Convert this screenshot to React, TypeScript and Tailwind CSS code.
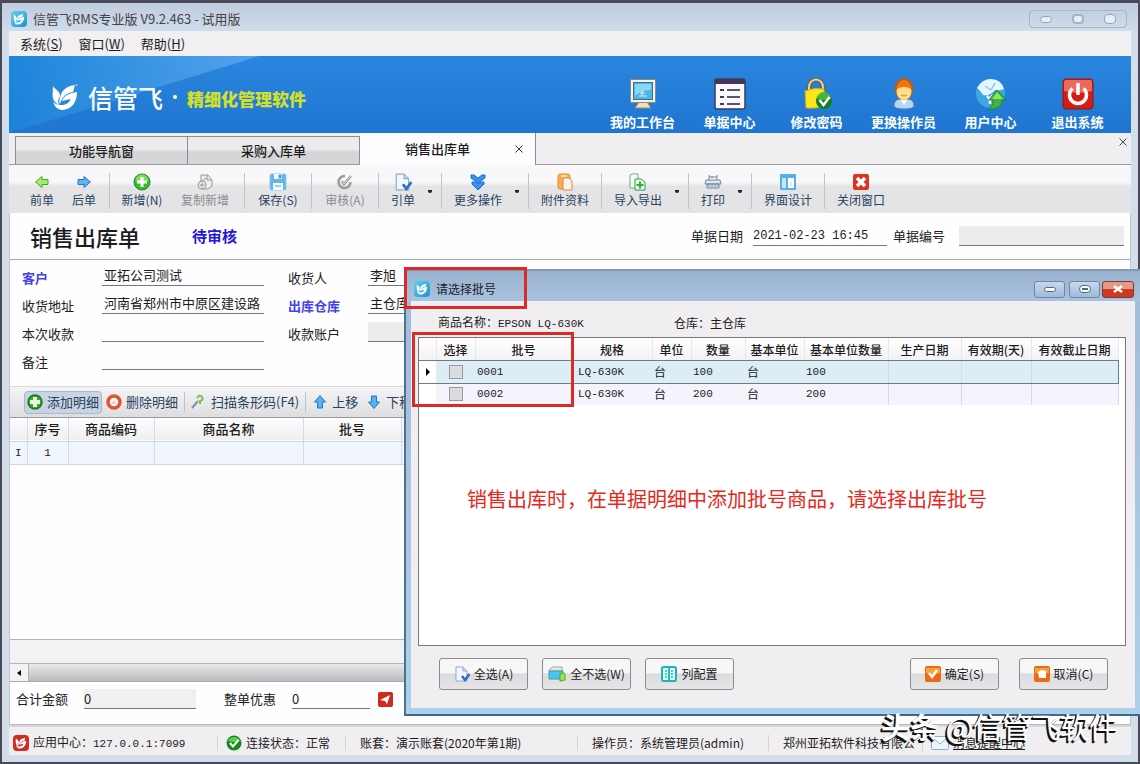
import React from 'react';
import { clsx } from 'clsx';

const Check = ({ className }: { className?: string }) => (
  <svg viewBox="0 0 16 16" className={className}>
    <circle cx="8" cy="8" r="7.5" fill="#128a1c" />
    <path d="M2 6a6.5 6.5 0 0 1 12 0Q8 8 2 6" fill="#5fce4f" />
    <path d="m4 8 3 3.5L12.5 5" fill="none" stroke="#fff" strokeWidth="2" />
  </svg>
);

const Bird = ({ className, fill = '#fff' }: { className?: string; fill?: string }) => (
  <svg viewBox="0 0 26 28" className={className} fill={fill}>
    <path d="M1 3c1 3 6 4 7 9q0 3-2 5 0 2 1 5-6-3-6.500-9z" />
    <path d="M23 2C14 3 9 8 8 15c-1 2-1 4 0 6 2-7 6-11 13-12z" />
    <path d="M25 9c-7 1-13 3-15 9l8.500-2c-1 4-5 6-9.500 6-3 0-6-1-8-3 2 6 6 8 10 8 9-1 14-8 14-18z" />
    <circle cx="24.500" cy="2" r="1" opacity=".6" />
  </svg>
);

const AppMark = ({ className }: { className?: string }) => (
  <span className={clsx('flex shrink-0 items-center justify-center rounded bg-linear-to-br from-[#5fd0f0] to-[#1593cf]', className)}>
    <Bird className="size-3" />
  </span>
);

const Clipboard = ({ className }: { className?: string }) => (
  <svg viewBox="0 0 16 16" className={className}>
    <path d="M2 1h7l4 4v10H2z" fill="#f3f7fc" stroke="#8da8cf" />
    <path d="M9 1v4h4" fill="#c9daf0" stroke="#8da8cf" />
    <path d="m8 10 3 4 4.500-6" fill="none" stroke="#2a6cd0" strokeWidth="2.500" />
  </svg>
);

const Arrow = ({ className, fill, stroke }: { className?: string; fill: string; stroke: string }) => (
  <svg viewBox="0 0 16 16" className={className}>
    <path d="M1.500 8 8 2.500V5.500H14v5H8v3z" fill={fill} stroke={stroke} strokeLinejoin="round" />
  </svg>
);

const icons = {
  prev: <Arrow className="size-4" fill="#a4ee5c" stroke="#44a52c" />,
  next: <Arrow className="size-4 rotate-180" fill="#5cb4f8" stroke="#2c72bd" />,
  add: (
    <svg viewBox="0 0 18 18" className="size-[18px]">
      <circle cx="9" cy="9" r="8" fill="#3cb72c" stroke="#238a1c" />
      <path d="M2.500 8a6.500 6.500 0 0 1 13 0Q9 10 2.500 8" fill="#7fdc63" />
      <path d="M9 4v10M4 9h10" stroke="#fff" strokeWidth="3" />
    </svg>
  ),
  copy: (
    <svg viewBox="0 0 18 18" className="size-[18px]" fill="#eee" stroke="#999">
      <path d="M5 2h7l4 5v6l-4 3H5z" />
      <path d="M11 2v5h5M10 5 5 9" fill="none" />
      <circle cx="6" cy="12" r="4" />
      <path d="M3.500 12h5M6 9.500v5" />
    </svg>
  ),
  save: (
    <svg viewBox="0 0 18 18" className="size-[18px]">
      <rect x="1" y="1" width="16" height="16" rx="1.500" fill="#62b5e6" stroke="#8ccbf0" />
      <path d="M5 1h8v5H5zM4 10h10v7H4z" fill="#f2fbff" />
      <path d="M10 2h2v3h-2zM6 13h6" fill="#4d9ed2" stroke="#4d9ed2" />
    </svg>
  ),
  audit: (
    <svg viewBox="0 0 18 18" className="size-[18px]" fill="none" stroke="#999">
      <path d="M14.500 9A6 6 0 1 1 9 3" strokeWidth="2.500" />
      <path d="M5.500 8 8 11l7-8" strokeWidth="2.500" />
      <path d="M5.500 8 8 11l7-8" stroke="#ddd" />
    </svg>
  ),
  quote: <Clipboard className="size-[18px]" />,
  more: (
    <svg viewBox="0 0 18 18" className="size-[18px]" fill="#3792ee" stroke="#1c6cc8" strokeLinejoin="round">
      <path d="m2 2 3 0 4 3 4-3 3 0 0 3-7 5-7-5z" />
      <path d="m3 9 3 0 3 2 3-2 3 0 0 2-6 6-6-6z" />
    </svg>
  ),
  attach: (
    <svg viewBox="0 0 18 18" className="size-[18px]">
      <rect x="2" y="1" width="12" height="15" rx="2" fill="#f8ad4a" stroke="#e58e27" />
      <path d="M7 5h6l3 3v9H7z" fill="#fff2e4" stroke="#db8550" />
      <path d="M5 2h6v2H5z" fill="#fde0a8" />
    </svg>
  ),
  io: (
    <svg viewBox="0 0 18 18" className="size-[18px]">
      <path d="M1 2q3-2 8-1v14H1z" fill="#f7fbf8" stroke="#7da292" />
      <path d="M6 6h6l4 3v8H6z" fill="#effcef" stroke="#2f9e3a" />
      <path d="M11 8.500v7M7.500 12h7" stroke="#2fae3a" strokeWidth="2" />
    </svg>
  ),
  print: (
    <svg viewBox="0 0 18 18" className="size-[18px]" fill="#dfe5ec" stroke="#74869b">
      <path d="M5 7V2M13 7V2M8 5V3M5 4h8" />
      <path d="M2 7h14l1 4H1zM3 11h12v4H3z" />
      <path d="M4 13h10" strokeDasharray="2 1" />
    </svg>
  ),
  design: (
    <svg viewBox="0 0 18 18" className="size-[18px]">
      <rect x="1" y="1" width="16" height="16" rx="1" fill="#58afe6" />
      <path d="M3 5h4v10H3z" fill="#c5e6fa" />
      <path d="M9 5h6v10H9z" fill="#fff" />
      <path d="M12 8v5" stroke="#b6d8ee" />
    </svg>
  ),
  close: (
    <svg viewBox="0 0 18 18" className="size-[18px]">
      <rect x="1" y="1" width="16" height="16" rx="2" fill="#d93521" />
      <path d="m5 5 8 8M13 5l-8 8" stroke="#fff" strokeWidth="3.500" />
    </svg>
  ),
};

type Tool = { label: string; icon: keyof typeof icons; width: string; disabled?: boolean; menu?: boolean; sep?: boolean };

const tools: Tool[] = [
  { label: '前单', icon: 'prev', width: 'w-[42px]' },
  { label: '后单', icon: 'next', width: 'w-[42px]', sep: true },
  { label: '新增(N)', icon: 'add', width: 'w-14' },
  { label: '复制新增', icon: 'copy', width: 'w-[70px]', disabled: true, sep: true },
  { label: '保存(S)', icon: 'save', width: 'w-[58px]', sep: true },
  { label: '审核(A)', icon: 'audit', width: 'w-[58px]', disabled: true, sep: true },
  { label: '引单', icon: 'quote', width: 'w-10', menu: true, sep: true },
  { label: '更多操作', icon: 'more', width: 'w-16', menu: true, sep: true },
  { label: '附件资料', icon: 'attach', width: 'w-16', sep: true },
  { label: '导入导出', icon: 'io', width: 'w-16', menu: true, sep: true },
  { label: '打印', icon: 'print', width: 'w-10', menu: true, sep: true },
  { label: '界面设计', icon: 'design', width: 'w-16', sep: true },
  { label: '关闭窗口', icon: 'close', width: 'w-16' },
];

const navItems = [
  {
    label: '我的工作台',
    icon: (
      <svg viewBox="0 0 32 32" className="size-8">
        <path d="M12 24h8l4 6H8z" fill="#f6dfb4" stroke="#9c8b66" />
        <rect x="3.500" y="1.500" width="25" height="23" fill="#f7f4e4" stroke="#8a8a80" />
        <rect x="6.500" y="4.500" width="19" height="17" fill="#4db6e8" stroke="#3d6f92" />
        <path d="M8 6h16v6Q14 12 8 18z" fill="#8ad6f5" />
        <path d="M12 18h8M13 15h5M15 12v6" stroke="#d8f3ff" />
      </svg>
    ),
  },
  {
    label: '单据中心',
    icon: (
      <svg viewBox="0 0 32 32" className="size-8">
        <rect x="1" y="1" width="30" height="30" rx="2" fill="#fbf8ff" stroke="#3d3b5c" strokeWidth="1.500" />
        <path d="M1 1h30v5H1z" fill="#46365a" />
        <path d="M6 12h4M6 19h4M6 26h4" stroke="#3c3c50" strokeWidth="2" />
        <path d="M13 12h13M13 19h13M13 26h13" stroke="#5a5570" strokeWidth="2" />
      </svg>
    ),
  },
  {
    label: '修改密码',
    icon: (
      <svg viewBox="0 0 32 32" className="size-8">
        <path d="M8 15V9a6.500 7 0 0 1 14 0v5" fill="none" stroke="#77633a" strokeWidth="4.500" />
        <path d="M8 15V9a6.500 7 0 0 1 14 0v5" fill="none" stroke="#dcd4b4" strokeWidth="2" />
        <path d="M4 13q10-4 19-2l1 17q-9 3-19 2z" fill="#fbe61b" stroke="#cfae10" />
        <circle cx="23" cy="23" r="8" fill="#12801c" />
        <path d="M16 21a7 7 0 0 1 14 0q-7 2-14 0" fill="#4cb33c" />
        <path d="m18.500 22 4 5 6-8" fill="none" stroke="#fff" strokeWidth="2.500" />
      </svg>
    ),
  },
  {
    label: '更换操作员',
    icon: (
      <svg viewBox="0 0 32 32" className="size-8">
        <path d="M6 28q0-7 7-7h6q7 0 7 7-1 3-10 3T6 28Z" fill="#b8d6f5" stroke="#577eae" />
        <path d="m12 21 4 6 4-6" fill="#fff" />
        <ellipse cx="16" cy="11" rx="9.500" ry="11" fill="#b3601a" />
        <ellipse cx="16" cy="13.500" rx="7.500" ry="8.500" fill="#ffdf85" />
        <path d="M8 12q2-10 8-10t8 10q-3-3-8-3t-8 3Z" fill="#f1780f" />
        <path d="M13 17q3 2 6 0" fill="none" stroke="#d98a35" />
      </svg>
    ),
  },
  {
    label: '用户中心',
    icon: (
      <svg viewBox="0 0 32 32" className="size-8">
        <circle cx="15.500" cy="15.500" r="14.500" fill="#3ba7e4" />
        <path d="M2 10Q7 1 16 1q10 0 13 10-5 2-9 1-6 7-12 5-2-4-6-7Z" fill="#e4f6ff" />
        <path d="m10 8 6 4M20 5l-4 7" stroke="#8fc8e8" strokeWidth="1.500" />
        <path d="m12 18 3 3v5M18 17l-3 4" fill="none" stroke="#fff" strokeWidth="2.500" />
        <path d="m22 12 9 10h-4q0 7-8 9h-6q6-3 5-9h-4z" fill="#3fb438" stroke="#1e8b32" />
        <path d="m22 14 6 7H17z" fill="#8fe064" />
      </svg>
    ),
  },
  {
    label: '退出系统',
    icon: (
      <svg viewBox="0 0 32 32" className="size-8">
        <rect x="1" y="1" width="30" height="30" rx="3" fill="#d61a14" stroke="#8f1512" />
        <path d="M2 4q0-2 2-2h24q2 0 2 2v9Q16 17 2 13z" fill="#ee6a58" />
        <path d="M10.500 10.500a8.500 8.500 0 1 0 11 0M16 5v12" fill="none" stroke="#fff" strokeWidth="3.500" />
      </svg>
    ),
  },
];

const Sep = () => <span className="mx-1 h-9 w-px shrink-0 bg-[#c4c4c8]" />;

const DetailSep = () => <span className="mx-1.5 h-5 w-px bg-[#c0c0c6]" />;

function Field({ id, label, value, link, filled }: { id: string; label: string; value?: string; link?: boolean; filled?: boolean }) {
  return (
    <div className="flex h-7 items-center">
      <label htmlFor={id} className={clsx('w-20 pt-1', link && 'font-bold text-[#4343e8]')}>
        {label}
      </label>
      <input
        id={id}
        defaultValue={value}
        className={clsx('h-5 w-[162px] border-b border-[#77777b] px-0.5 pb-0.5 outline-none', filled ? 'bg-[#ececee]' : 'bg-transparent')}
      />
    </div>
  );
}

const batchHeads = [
  ['', 'w-[17px]'],
  ['选择', 'w-[39px]'],
  ['批号', 'w-[97px]'],
  ['规格', 'w-20'],
  ['单位', 'w-[39px]'],
  ['数量', 'w-[54px]'],
  ['基本单位', 'w-[59px]'],
  ['基本单位数量', 'w-[84px]'],
  ['生产日期', 'w-[73px]'],
  ['有效期(天)', 'w-[70px]'],
  ['有效截止日期', 'w-[87px]'],
];

const batches = [
  { no: '0001', spec: 'LQ-630K', unit: '台', qty: 100, baseUnit: '台', baseQty: 100 },
  { no: '0002', spec: 'LQ-630K', unit: '台', qty: 200, baseUnit: '台', baseQty: 200 },
];

const dialogButton =
  'flex h-8 w-[89px] items-center justify-center gap-1 whitespace-nowrap rounded-[3px] border border-[#8b8b90] bg-linear-to-b from-[#f7f7f8] from-45% via-[#dcdcdf] via-50% to-[#e6e6e8]';

const winButton = 'flex h-[17px] items-center justify-center rounded-[3px] border border-[#71869f] bg-linear-to-b from-[#c6d8ec] to-[#9fbbd9]';

function BatchDialog() {
  return (
    <section
      role="dialog"
      aria-label="请选择批号"
      className="absolute top-[266px] -right-0.5 left-[402px] flex flex-col border-2 border-r-0 border-t-[#8299b3] border-l-[#4b7391] border-b-[#3a6a90] bg-linear-to-b from-[#a3bbd8] to-[#aed0ea] pr-[5px] pb-1.5 pl-[5px]"
    >
      <header className="-mx-[5px] flex h-[30px] items-center bg-linear-to-b from-[#98b1cf] to-[#a9c2df] pt-1.5 pr-1.5 pl-2">
        <AppMark className="size-4" />
        <h2 className="ml-1.5 flex-1 text-[12px] text-[#222]">请选择批号</h2>
        <button aria-label="最小化" className={clsx(winButton, 'w-[31px]')}>
          <span className="h-[5px] w-3 rounded-sm border border-[#55687e] bg-white" />
        </button>
        <button aria-label="最大化" className={clsx(winButton, 'ml-1 w-[31px]')}>
          <span className="flex h-2 w-3 items-center justify-center rounded-sm border border-[#55687e] bg-white">
            <span className="h-0.5 w-1.5 bg-[#55687e]" />
          </span>
        </button>
        <button aria-label="关闭" className="ml-0.5 flex h-[17px] w-8 items-center justify-center rounded-[3px] border border-[#7d3a33] bg-linear-to-b from-[#e69a86] from-45% to-[#cc3a22] to-50%">
          <svg viewBox="0 0 10 8" className="h-2 w-2.5">
            <path d="m1 1 8 6M9 1 1 7" stroke="#fff" strokeWidth="2.500" />
          </svg>
        </button>
      </header>

      <div className="bg-[#f0eef0] pr-[9px] pb-[18px] pl-[7px]">
        <div className="flex h-9 items-center pt-2 pl-5 text-[12px]">
          <p className="w-[236px]">
            商品名称：<span className="font-mono text-[11px]">EPSON LQ-630K</span>
          </p>
          <p>仓库：主仓库</p>
        </div>

        <div className="flex min-h-[309px] flex-col border border-[#77777b] bg-white">
          <table className="w-[699px] table-fixed border-collapse">
            <thead>
              <tr className="h-[23px] bg-linear-to-b from-white to-[#f2f1f3]">
                {batchHeads.map(([text, width], i) => (
                  <th key={i} className={clsx(width, 'whitespace-nowrap border-r border-[#e8e8ec] p-0 text-[12px] font-medium')}>
                    {text}
                  </th>
                ))}
              </tr>
            </thead>
            <tbody>
              {batches.map((b, i) => (
                <tr key={b.no} className={clsx('h-[22px]', i === 0 ? 'bg-[#dcedf6] outline outline-[#6d7d88]' : 'bg-[#f5f3fb]')}>
                  <td className="bg-white p-0 text-center">
                    {i === 0 && (
                      <svg viewBox="0 0 6 8" className="mx-auto h-2 w-1.5">
                        <path d="M1 0v8l4-4z" />
                      </svg>
                    )}
                  </td>
                  <td className="p-0">
                    <input
                      type="checkbox"
                      aria-label={`选择 ${b.no}`}
                      className="mx-auto block size-3.5 appearance-none border border-[#9a9aa0] bg-[#dcdce0]"
                    />
                  </td>
                  <td className="px-0.5 py-0 font-mono text-[11px]">{b.no}</td>
                  <td className="px-1.5 py-0 font-mono text-[11px]">{b.spec}</td>
                  <td className="px-0.5 py-0 text-[12px]">{b.unit}</td>
                  <td className="px-0.5 py-0 font-mono text-[11px]">{b.qty}</td>
                  <td className="px-0.5 py-0 text-[12px]">{b.baseUnit}</td>
                  <td className="border-r border-[#d3dbe6] px-0.5 py-0 font-mono text-[11px]">{b.baseQty}</td>
                  <td className="border-r border-[#d3dbe6]" />
                  <td className="border-r border-[#d3dbe6]" />
                  <td className="border-r border-[#d3dbe6]" />
                </tr>
              ))}
            </tbody>
          </table>
          <p className="mt-20 pl-12 text-[20px] leading-7 whitespace-nowrap text-[#e8271c]">
            销售出库时，在单据明细中添加批号商品，请选择出库批号
          </p>
        </div>

        <div className="mt-3 flex pr-[18px] pl-[21px] text-[12px]">
          <button className={dialogButton}>
            <Clipboard className="size-4" />
            全选(A)
          </button>
          <button className={clsx(dialogButton, 'ml-3.5')}>
            <svg viewBox="0 0 18 16" className="h-4 w-[18px]">
              <path d="M1 4 4 1h10v4H1z" fill="#e8e6d8" stroke="#a9a896" />
              <path d="M1 5h14v8H1z" fill="#4cc4ec" stroke="#3a9cc4" />
              <path d="M12 8q5-2 5 0v6l-5 1z" fill="#9be44a" stroke="#57a82c" />
            </svg>
            全不选(W)
          </button>
          <button className={clsx(dialogButton, 'ml-3.5')}>
            <svg viewBox="0 0 16 16" className="size-4">
              <rect x="1" y="1" width="14" height="14" rx="1.500" fill="#d9fbf5" stroke="#23b2ae" strokeWidth="2" />
              <path d="M8 2v12" stroke="#2eb8b2" strokeWidth="2" />
              <path d="M4 5h2M4 8h2M4 11h2M10 5h2M10 8h2M10 11h2" stroke="#2eb8b2" strokeWidth="1.500" />
            </svg>
            列配置
          </button>
          <button className={clsx(dialogButton, 'ml-auto')}>
            <svg viewBox="0 0 16 16" className="size-4">
              <rect width="16" height="16" rx="2" fill="#ec6a16" />
              <path d="M1 2h14v5Q8 9 1 7z" fill="#f8a03c" />
              <path d="m4 7 3 4 5-7" fill="none" stroke="#fff" strokeWidth="2.500" />
            </svg>
            确定(S)
          </button>
          <button className={clsx(dialogButton, 'ml-5')}>
            <svg viewBox="0 0 16 16" className="size-4">
              <rect width="16" height="16" rx="2" fill="#ec6a16" />
              <path d="M1 2h14v5Q8 9 1 7z" fill="#f8a03c" />
              <path d="m4 6 3-2 5 1v7H5z" fill="#fff" />
            </svg>
            取消(C)
          </button>
        </div>
      </div>

      {/* highlight frames around the title and the batch columns */}
      <div className="pointer-events-none absolute -top-1 -left-0.5 h-[42px] w-[123px] border-[3px] border-[#dd2a26]" />
      <div className="pointer-events-none absolute top-[61px] left-1.5 h-[75px] w-[162px] border-[3px] border-[#dd2a26]" />
    </section>
  );
}

export default function App() {
  return (
    <div className="relative flex min-h-screen flex-col border-2 border-t-[3px] border-[#4a4a58] bg-[#d2deeb] pr-[7px] pb-[7px] pl-[7px] font-['Noto_Sans_CJK_SC',sans-serif] text-[13px] leading-4 text-[#1c1c1c] [--font-mono:'Liberation_Mono','Noto_Sans_CJK_SC',monospace]">
      <header className="-mx-[7px] flex h-7 items-center bg-linear-to-b from-[#c0cbdf] to-[#d0ddec] pt-1 pr-[11px] pl-[9px]">
        <AppMark className="size-4" />
        <h1 className="ml-1.5 flex-1 text-[13px] text-[#444]">信管飞RMS专业版 V9.2.463 - 试用版</h1>
        <div className="flex h-[18px] w-[98px] items-center justify-around rounded-sm border border-[#a9b5c6] text-[#98a2b2]">
          <button aria-label="最小化" className="h-[7px] w-3 rounded-sm border border-[#98a2b2] bg-[#e8eef5]" />
          <button aria-label="还原" className="h-2.5 w-3 rounded-sm border-2 border-[#a8b1bf] bg-[#e8eef5]" />
          <button aria-label="关闭" className="h-2.5 w-3 rounded-sm border border-[#98a2b2] bg-[#e8eef5]" />
        </div>
      </header>

      <nav className="flex h-[25px] items-center gap-4 bg-[#f1eff1] pl-[11px]">
        <button>系统(<u>S</u>)</button>
        <button>窗口(<u>W</u>)</button>
        <button>帮助(<u>H</u>)</button>
      </nav>

      <div className="relative flex h-[77px] items-center bg-linear-to-b from-[#2a86e0] to-[#1f75cf] pr-2.5 pl-[43px]">
        <svg viewBox="0 0 250 77" className="absolute top-0 left-0 h-[77px] w-[250px]">
          <defs>
            <linearGradient id="sheen" x1="0" x2="1">
              <stop offset="0" stopColor="#1a86da" />
              <stop offset="1" stopColor="#60acee" />
            </linearGradient>
          </defs>
          <path d="M0 0h250Q160 28 0 77z" fill="url(#sheen)" opacity=".75" />
        </svg>
        <div className="relative flex items-center pt-1 text-white">
          <Bird className="h-7 w-[26px]" />
          <span className="ml-2.5 text-[25px] leading-8 font-medium">信管飞</span>
          <span className="mx-2.5 size-1 rounded-full bg-white" />
          <span className="pt-1 text-[17px] leading-5 font-black text-[#d3e02b]">精细化管理软件</span>
        </div>
        <div className="ml-auto flex pt-[19px]">
          {navItems.map((item) => (
            <button key={item.label} className="flex w-[87px] flex-col items-center gap-1 font-bold text-white">
              {item.icon}
              {item.label}
            </button>
          ))}
        </div>
      </div>

      <div role="tablist" className="flex h-8 items-end border-b border-[#9a9a9e] bg-[#f0eef0] pl-1.5">
        <button role="tab" className="h-7 w-[173px] border border-b-0 border-[#8e8e92] bg-linear-to-b from-[#ececee] from-45% to-[#d6d5d8] to-55% font-medium">
          功能导航窗
        </button>
        <button role="tab" className="h-7 w-[172px] border border-b-0 border-l-0 border-[#8e8e92] bg-linear-to-b from-[#ececee] from-45% to-[#d6d5d8] to-55% font-medium">
          采购入库单
        </button>
        <button role="tab" aria-selected="true" className="-mb-px flex h-8 w-[176px] items-center border-r border-[#8e8e92] bg-[#fdfcfe] pr-2.5 pl-[45px] font-medium">
          销售出库单
          <svg viewBox="0 0 8 8" className="mr-0.5 ml-auto size-2">
            <path d="m.5.5 7 7M7.500.5l-7 7" stroke="#333" />
          </svg>
        </button>
        <button aria-label="关闭" className="mr-1 mb-[18px] ml-auto">
          <svg viewBox="0 0 8 8" className="size-2">
            <path d="m.5.5 7 7M7.500.5l-7 7" stroke="#444" />
          </svg>
        </button>
      </div>

      <div className="flex h-12 items-center overflow-hidden bg-linear-to-b from-[#f8f7f9] from-35% to-[#e4e3e5] to-45% pt-1 pl-3">
        {tools.map((t) => (
          <React.Fragment key={t.label}>
            <button
              disabled={t.disabled}
              className={clsx('flex shrink-0 flex-col items-center whitespace-nowrap text-[12px]', t.width, t.disabled ? 'text-[#8c8c90]' : 'text-[#27435f]')}
            >
              <span className="flex h-[18px] items-center">{icons[t.icon]}</span>
              <span className="leading-[18px]">{t.label}</span>
            </button>
            {t.menu && (
              <span className="flex w-3.5 shrink-0 justify-center">
                <span className="h-[3px] w-1 rounded-b-full bg-[#222]" />
              </span>
            )}
            {t.sep && <Sep />}
          </React.Fragment>
        ))}
      </div>

      <main className="flex flex-1 flex-col border-x border-[#c0c4cc] bg-[#fefdff]">
        <div className="flex h-[47px] items-center border-b border-[#a9a9ad] pr-1.5 pl-5">
          <h2 className="text-[22px] leading-7 font-medium">销售出库单</h2>
          <strong className="ml-[52px] text-[15px] text-[#2418d8]">待审核</strong>
          <label htmlFor="date" className="ml-auto">单据日期</label>
          <input id="date" defaultValue="2021-02-23 16:45" className="ml-2.5 h-5 w-[134px] border-b border-[#77777b] font-mono text-[12px] outline-none" />
          <label htmlFor="number" className="ml-1.5">单据编号</label>
          <input id="number" className="ml-3.5 h-5 w-[165px] border-b border-[#77777b] bg-[#ececee] outline-none" />
        </div>

        <div className="flex h-[126px] gap-6 pt-0.5 pl-3">
          <div>
            <Field id="customer" label="客户" value="亚拓公司测试" link />
            <Field id="address" label="收货地址" value="河南省郑州市中原区建设路" />
            <Field id="received" label="本次收款" />
            <Field id="remark" label="备注" />
          </div>
          <div>
            <Field id="receiver" label="收货人" value="李旭" />
            <Field id="warehouse" label="出库仓库" value="主仓库" link />
            <Field id="account" label="收款账户" filled />
          </div>
        </div>

        <div className="flex h-8 items-center border-y border-t-[#d8d8dc] border-b-[#9a9a9e] bg-linear-to-b from-[#f5f4f6] to-[#dedde0] pl-3.5 text-[13px] text-[#27435f]">
          <button className="flex h-[23px] items-center gap-1 rounded-sm border border-[#a9b9cc] bg-[#c9d4e3] px-0.5">
            <svg viewBox="0 0 16 16" className="size-4">
              <circle cx="8" cy="8" r="7" fill="#3aa52c" stroke="#187a28" strokeWidth="1.500" />
              <path d="M6 3h4v3h3v4h-3v3H6v-3H3V6h3z" fill="#e9fbd6" />
            </svg>
            添加明细
          </button>
          <button className="ml-1 flex items-center gap-1">
            <svg viewBox="0 0 16 16" className="size-4">
              <circle cx="8" cy="8" r="6" fill="#fff" stroke="#e3532f" strokeWidth="3.500" />
              <path d="M5 10 8 6l3 4z" fill="#f6c9b8" />
            </svg>
            删除明细
          </button>
          <DetailSep />
          <button className="flex items-center gap-1.5">
            <svg viewBox="0 0 14 16" className="h-4 w-3.5" fill="none">
              <path d="m1 14 6-7" stroke="#7e93a8" strokeWidth="2" />
              <path d="M6 4q3-4 5-1t-2 4v3" stroke="#86b95c" strokeWidth="2" />
            </svg>
            扫描条形码(F4)
          </button>
          <DetailSep />
          <button className="flex items-center gap-1">
            <Arrow className="size-4 rotate-90" fill="#52b2f6" stroke="#2c72bd" />
            上移
          </button>
          <button className="ml-2 flex items-center gap-1">
            <Arrow className="size-4 -rotate-90" fill="#52b2f6" stroke="#2c72bd" />
            下移
          </button>
        </div>

        <table className="w-full table-fixed border-collapse">
          <thead>
            <tr className="h-[23px] border-b border-[#cfd6e2] bg-linear-to-b from-[#fdfcfe] to-[#efeef1]">
              <th className="w-[17px] p-0" />
              <th className="w-[41px] border-x border-[#d5dbe5] p-0 font-medium">序号</th>
              <th className="w-[86px] border-x border-[#d5dbe5] p-0 font-medium">商品编码</th>
              <th className="w-[149px] border-x border-[#d5dbe5] p-0 font-medium">商品名称</th>
              <th className="w-[98px] border-x border-[#d5dbe5] p-0 font-medium">批号</th>
              <th className="p-0" />
            </tr>
          </thead>
          <tbody>
            <tr className="h-[23px] border-b border-[#cfd6e2] bg-[#f1f5fe] text-center font-mono text-[11px]">
              <td className="p-0">I</td>
              <td className="border-x border-[#d5dbe5] p-0">1</td>
              <td className="border-x border-[#d5dbe5]" />
              <td className="border-x border-[#d5dbe5]" />
              <td className="border-x border-[#d5dbe5]" />
              <td />
            </tr>
          </tbody>
        </table>
        <div className="flex-1" />
        <div className="h-[25px] border-y border-[#b4b4b8] bg-[#f2f1f4]" />
        <div className="flex h-[18px] border-b border-[#aaaaae] bg-linear-to-b from-[#e9e8ea] to-[#bcbbbf]">
          <button aria-label="向左滚动" className="flex w-[19px] items-center justify-center border-r border-[#b0b0b4] bg-[#f3f2f4]">
            <svg viewBox="0 0 4 6" className="h-1.5 w-1">
              <path d="M4 0v6L0 3z" />
            </svg>
          </button>
        </div>

        <div className="flex h-[43px] items-center border-b border-[#b9b9bd] pb-2 pl-1.5">
          <label htmlFor="total">合计金额</label>
          <input id="total" defaultValue="0" className="ml-4 h-5 w-28 border-b border-[#77777b] bg-[#f0eff1] outline-none" />
          <label htmlFor="discount" className="ml-7">整单优惠</label>
          <input id="discount" defaultValue="0" className="ml-4 h-5 w-[78px] border-b border-[#77777b] outline-none" />
          <button aria-label="应用优惠" className="ml-2">
            <svg viewBox="0 0 15 15" className="size-[15px]">
              <rect width="15" height="15" rx="2" fill="#cf2a1b" />
              <path d="m2 8 10-5-3 9-2-3z" fill="#fff" />
            </svg>
          </button>
        </div>
      </main>

      <footer className="flex h-[30px] items-center whitespace-nowrap border-t-2 border-[#d8d7da] bg-[#f0eef0] pt-1 pl-1 text-[12px]">
        <span className="flex size-4 items-center justify-center rounded-sm bg-[#d02a22]">
          <Bird className="size-3" />
        </span>
        <p className="ml-1 w-[184px]">
          应用中心：<span className="font-mono text-[11px]">127.0.0.1:7099</span>
        </p>
        <p className="flex w-32 items-center gap-1 border-l border-[#d2d2d6] pl-2">
          <Check className="size-4" />
          连接状态：正常
        </p>
        <p className="w-[232px] border-l border-[#d2d2d6] pl-3.5">账套：演示账套(2020年第1期)</p>
        <p className="w-[191px] border-l border-[#d2d2d6] pl-3.5">操作员：系统管理员(admin)</p>
        <p className="w-[154px] overflow-hidden border-l border-[#d2d2d6] pl-3.5">郑州亚拓软件科技有限公</p>
        <p className="flex flex-1 items-center gap-1 border-l border-[#d2d2d6] pl-2">
          <svg viewBox="0 0 18 14" className="h-3.5 w-[18px]">
            <rect x=".5" y=".5" width="17" height="13" rx="1" fill="#eaf4fc" stroke="#82b3dc" />
            <path d="m1 1 8 7 8-7" fill="#fff" stroke="#82b3dc" />
          </svg>
          <a href="#messages" className="underline">消息提醒中心</a>
        </p>
      </footer>

      <BatchDialog />

      <p className="pointer-events-none absolute right-5 bottom-5 text-[29px] leading-8 whitespace-nowrap text-white [text-shadow:-2px_2px_0_#111,-1px_1px_0_#111]">
        <span className="font-bold">头条</span> @信管飞软件
      </p>
    </div>
  );
}
